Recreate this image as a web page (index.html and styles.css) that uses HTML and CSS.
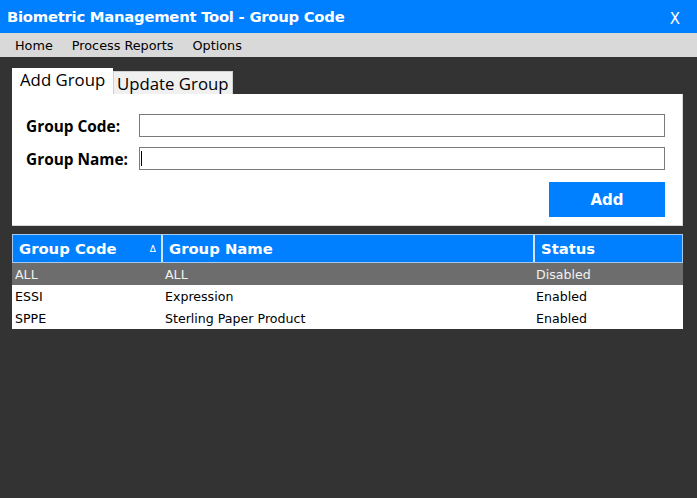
FILE: index.html
```html
<!DOCTYPE html>
<html>
<head>
<meta charset="utf-8">
<link rel="stylesheet" href="styles.css">
</head>
<body>
<div class="window">
  <div class="titlebar">
    <span class="title">Biometric Management Tool - Group Code</span>
    <span class="close">X</span>
  </div>
  <div class="menubar">
    <span class="menu-item">Home</span>
    <span class="menu-item">Process Reports</span>
    <span class="menu-item">Options</span>
  </div>
  <div class="content">
    <div class="tabs">
      <div class="tab active">Add Group</div>
      <div class="tab">Update Group</div>
    </div>
    <div class="panel">
      <div class="field">
        <label class="label">Group Code:</label>
        <div class="input"></div>
      </div>
      <div class="field">
        <label class="label">Group Name:</label>
        <div class="input"><span class="caret"></span></div>
      </div>
      <div class="actions">
        <div class="btn">Add</div>
      </div>
    </div>
    <div class="grid">
      <div class="row head">
        <div class="cell c1">Group Code<span class="sort">&#916;</span></div>
        <div class="cell c2">Group Name</div>
        <div class="cell c3">Status</div>
      </div>
      <div class="row sel">
        <div class="cell c1">ALL</div>
        <div class="cell c2">ALL</div>
        <div class="cell c3">Disabled</div>
      </div>
      <div class="row">
        <div class="cell c1">ESSI</div>
        <div class="cell c2">Expression</div>
        <div class="cell c3">Enabled</div>
      </div>
      <div class="row">
        <div class="cell c1">SPPE</div>
        <div class="cell c2">Sterling Paper Product</div>
        <div class="cell c3">Enabled</div>
      </div>
    </div>
  </div>
</div>
</body>
</html>
```
FILE: styles.css
```css
html, body {
  margin: 0;
  padding: 0;
}
body {
  width: 697px;
  height: 498px;
  background: #333333;
  overflow: hidden;
}
.window {
  display: flex;
  flex-direction: column;
  height: 498px;
}
.titlebar {
  height: 33px;
  background: #0080ff;
  display: flex;
  align-items: center;
  justify-content: space-between;
  padding: 0 17px 0 7px;
  color: #fff;
}
.title {
  font-family: "DejaVu Sans", sans-serif;
  font-weight: bold;
  font-size: 14.8px;
  letter-spacing: -0.25px;
  padding-bottom: 1px;
}
.close {
  font-family: "DejaVu Sans", sans-serif;
  font-size: 15px;
  padding-top: 4px;
}
.menubar {
  height: 24px;
  background: #d9d9d9;
  display: flex;
  align-items: center;
  padding-left: 15px;
  gap: 19px;
  font-family: "DejaVu Sans", sans-serif;
  font-size: 12.8px;
  color: #000;
}
.content {
  padding: 11px 14px 0 12px;
}
.tabs {
  display: flex;
  align-items: flex-end;
  height: 26px;
}
.tab {
  font-family: "Open Sans", sans-serif;
  font-size: 16.8px;
  color: #000;
  background: #f0f0f0;
  border: 1px solid #d0d0d0;
  border-bottom: none;
  height: 23px;
  line-height: 23px;
  padding: 0 3px;
  box-sizing: border-box;
  white-space: nowrap;
}
.tab.active {
  background: #fff;
  border: none;
  height: 26px;
  line-height: 24px;
  padding: 0 0 0 8px;
  width: 101px;
}
.panel {
  background: #fff;
  height: 132px;
  box-sizing: border-box;
  padding: 20px 17px 0 14px;
  border-right: 1px solid #d6d6d6;
  border-bottom: 1px solid #d6d6d6;
}
.field {
  display: flex;
  align-items: center;
  height: 23px;
  margin-bottom: 10px;
}
.label {
  width: 113px;
  font-family: "Open Sans", sans-serif;
  font-weight: bold;
  font-size: 15.4px;
  color: #000;
  padding-top: 2px;
}
.input {
  flex: 1;
  height: 23px;
  box-sizing: border-box;
  border: 1px solid #7a7a7a;
  position: relative;
}
.caret {
  position: absolute;
  left: 1px;
  top: 3px;
  width: 1px;
  height: 15px;
  background: #000;
}
.actions {
  display: flex;
  justify-content: flex-end;
  margin-top: 12px;
}
.btn {
  width: 116px;
  height: 35px;
  background: #0080ff;
  color: #fff;
  font-family: "DejaVu Sans", sans-serif;
  font-weight: bold;
  font-size: 15px;
  display: flex;
  align-items: center;
  justify-content: center;
}
.grid {
  margin-top: 8px;
  background: #fff;
  width: 671px;
}
.row {
  display: flex;
  height: 22px;
  align-items: center;
  font-family: "DejaVu Sans", sans-serif;
  font-size: 12.6px;
  color: #000;
}
.row.head {
  height: 29px;
  background: #0080ff;
  color: #fff;
  font-weight: bold;
  font-size: 14.8px;
  box-sizing: border-box;
  border: 1px solid #a9c9ec;
  align-items: stretch;
}
.row.head .cell {
  display: flex;
  align-items: center;
  padding-left: 6px;
}
.row.head .c1 { width: 148px; justify-content: space-between; padding-right: 5px; }
.row.head .c2 { border-left: 2px solid #cfe3ff; width: 372px; }
.row.head .c3 { border-left: 2px solid #cfe3ff; flex: 1; }
.sort {
  font-size: 9px;
  font-weight: normal;
}
.row.sel {
  background: #6d6d6d;
  color: #f2f2f2;
}
.cell {
  box-sizing: border-box;
  padding-left: 3px;
  white-space: nowrap;
}
.c1 { width: 150px; }
.c2 { width: 371px; }
.c3 { flex: 1; }
```
